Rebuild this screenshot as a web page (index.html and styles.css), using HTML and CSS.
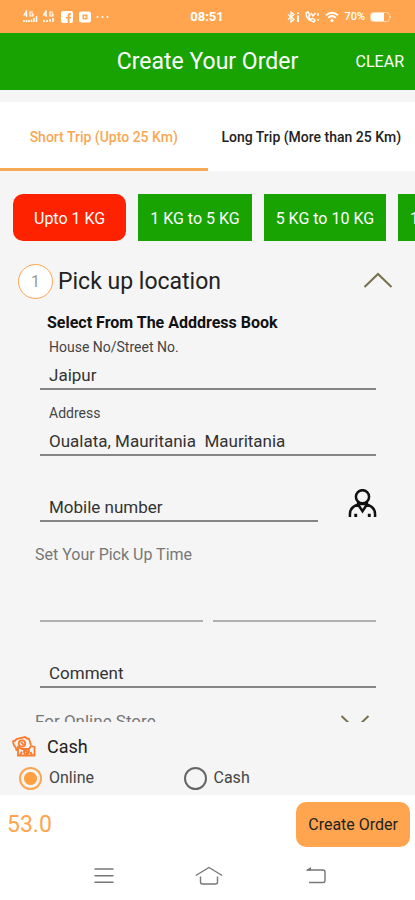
FILE: index.html
```html
<!DOCTYPE html>
<html lang="en">
<head>
<meta charset="utf-8">
<meta name="viewport" content="width=device-width, initial-scale=1">
<title>Create Your Order</title>
<link rel="stylesheet" href="styles.css">
</head>
<body>
<div class="status">
  <div class="status-left">
    <svg width="15" height="14" viewBox="0 0 15 14" fill="none" stroke="#fff" stroke-width="1.2"><path d="M3.5 7V1L1 5h3.5M10 2H7v4h3V4H8.500"/><path d="M1 12v-2M3.500 12v-2M6 12v-2M8.500 12V9.500M11 12V8M13.500 12V6" stroke-width="1.600"/></svg>
    <svg width="12" height="14" viewBox="0 0 12 14" fill="none" stroke="#fff" stroke-width="1.2"><path d="M4 7V1L1.500 5H5M11 2H8v4h3V4H9.500"/><path d="M2 12v-2M5 12v-2M8 12V9M11 12V8" stroke-width="1.600"/></svg>
    <svg class="gap-icon" width="12" height="12" viewBox="0 0 12 12"><path fill="#fff" fill-rule="evenodd" d="M2 0h8a2 2 0 0 1 2 2v8a2 2 0 0 1-2 2H8.500V7.600H10V6H8.500V4.500q0-1 1.500-.8V2.200Q6.600 1.700 6.600 4.500V6H5v1.600h1.600V12H2a2 2 0 0 1-2-2V2a2 2 0 0 1 2-2z"/></svg>
    <svg class="wide-icon" width="12" height="12" viewBox="0 0 12 12"><path fill="#fff" fill-rule="evenodd" d="M2.500 .5h7A2.500 2.500 0 0 1 12 3v6a2.500 2.500 0 0 1-2.500 2.500h-7A2.500 2.500 0 0 1 0 9V3A2.500 2.500 0 0 1 2.500 .5zM3.500 3.500v5h5v-5zM5 4.500L7.500 6 5 7.500z"/></svg>
    <svg width="13" height="12" viewBox="0 0 13 12" fill="#fff"><circle cx="1.500" cy="6" r="1"/><circle cx="6.500" cy="6" r="1"/><circle cx="11.500" cy="6" r="1"/></svg>
  </div>
  <time>08:51</time>
  <div class="status-right">
    <svg width="13" height="12" viewBox="0 0 13 12" fill="none" stroke="#fff" stroke-width="1.300"><path d="M1 3.500l6 5L4 11V1l3 2.500-6 5"/><path d="M11 4.500V11M11 1.500V3" stroke-width="2"/></svg>
    <svg width="15" height="12" viewBox="0 0 15 12" fill="none" stroke="#fff" stroke-width="1.400"><path d="M1 2c0 5 3 8 8 9l1-2-2.500-1.500L6 8.500Q4 7 3.500 5L5 4 3 1zM6 2l2 3 2.500-3M13 2v3M13 8v2"/></svg>
    <svg width="14" height="12" viewBox="0 0 14 12" fill="none" stroke="#fff" stroke-width="2"><path d="M1 4.300q6-5 12 0M3.200 6.800q3.800-3.300 7.600 0"/><path d="M7 7.800l2 1.600-2 2.200-2-2.200z" fill="#fff" stroke="none"/></svg>
    <span>70%</span>
    <svg width="21" height="10" viewBox="0 0 21 10"><rect x=".5" y=".5" width="19" height="9" rx="3" fill="none" stroke="#ffd9b0"/><path d="M3 1h11v8H3a2 2 0 0 1-2-2V3a2 2 0 0 1 2-2z" fill="#fff"/><path d="M20.500 4v2" stroke="#ffd9b0"/></svg>
  </div>
</div>
<header class="header">
  <h1>Create Your Order</h1>
  <button type="button" class="clear">CLEAR</button>
</header>
<nav class="tabs">
  <button type="button" class="tab active">Short Trip (Upto 25 Km)</button>
  <button type="button" class="tab">Long Trip (More than 25 Km)</button>
</nav>
<main class="content">
  <div class="chips">
    <button type="button" class="chip selected">Upto 1 KG</button>
    <button type="button" class="chip">1 KG to 5 KG</button>
    <button type="button" class="chip">5 KG to 10 KG</button>
    <button type="button" class="chip">10 KG to 15 KG</button>
  </div>
  <div class="section-head">
    <span class="step">1</span>
    <h2>Pick up location</h2>
    <svg width="30" height="22" viewBox="0 0 30 22" fill="none" stroke="#77724a" stroke-width="2"><path d="M1.500 16L15 3l13.500 13"/></svg>
  </div>
  <form class="form">
    <h3>Select From The Adddress Book</h3>
    <div class="field">
      <label for="house">House No/Street No.</label>
      <input id="house" type="text" value="Jaipur">
    </div>
    <div class="field address">
      <label for="address">Address</label>
      <input id="address" type="text" value="Oualata, Mauritania  Mauritania">
    </div>
    <div class="row">
      <input type="tel" aria-label="Mobile number" placeholder="Mobile number">
      <button type="button" class="contact" aria-label="Contacts">
        <svg width="29" height="29" viewBox="0 0 30 30" fill="none" stroke="#111" stroke-width="2.600"><circle cx="15" cy="8" r="6.800"/><path d="M10.500 13v3.500M19.500 13v3.500M10.500 15.500h9"/><path d="M2 29v-3q0-7.500 8.500-10L15 23l4.500-7Q28 18.500 28 26v3"/><path d="M8 29v-3.500M22 29v-3.500" stroke-width="3"/></svg>
      </button>
    </div>
    <p class="caption">Set Your Pick Up Time</p>
    <div class="times">
      <input type="text" aria-label="Pick up date">
      <input type="text" aria-label="Pick up time">
    </div>
    <input class="comment" type="text" aria-label="Comment" placeholder="Comment">
    <div class="store">
      <p class="caption">For Online Store</p>
      <svg width="30" height="18" viewBox="0 0 30 18" fill="none" stroke="#77724a" stroke-width="2"><path d="M1.500 4L15 17 28.500 4"/></svg>
    </div>
  </form>
</main>
<section class="payment">
  <div class="pay-title">
    <svg width="24" height="22" viewBox="0 0 24 22" fill="none" stroke="#fb7a2c" stroke-width="1.800"><path d="M6 13.500L4.500 14Q4 11 2 9.500L1 5.500Q3.500 5 4.500 3L13 1q2 2 4 2l2 6"/><circle cx="10" cy="7.500" r="3.200"/><path d="M9 6l2.500 3M6 19.500V11l4 2h7l2-3 3.500 1v8.500zM8 19l2-3.500M20 19l-1.500-3"/><circle cx="14.500" cy="15.500" r="2.500"/><path d="M13 14l3 3"/></svg>
    <span>Cash</span>
  </div>
  <div class="options">
    <label><input type="radio" name="pay" checked>Online</label>
    <label><input type="radio" name="pay">Cash</label>
  </div>
</section>
<footer class="footer">
  <strong class="price">53.0</strong>
  <button type="button" class="create">Create Order</button>
</footer>
<nav class="system" aria-label="System">
  <button type="button" aria-label="Recent apps"><svg width="28" height="20" viewBox="0 0 28 20" fill="none" stroke="#777" stroke-width="1.400"><path d="M4.500 3h19M4.500 9.700h19M4.500 16.300h19"/></svg></button>
  <button type="button" aria-label="Home"><svg width="28" height="20" viewBox="0 0 28 20" fill="none" stroke="#777" stroke-width="1.400"><path d="M.8 9.500L14 1.500l13.200 8M5.500 10.500V16q0 2 2 2h13q2 0 2-2v-5.500"/></svg></button>
  <button type="button" aria-label="Back"><svg width="28" height="20" viewBox="0 0 28 20" fill="none" stroke="#777" stroke-width="1.400"><path d="M7 4h16q2 0 2 2v8.500q0 2-2 2H9"/><path d="M5.500 4.500L11 1v3.500z" fill="#777" stroke="none"/></svg></button>
</nav>
</body>
</html>
```
FILE: styles.css
```css
* {
  box-sizing: border-box;
}

body {
  margin: 0;
  height: 100vh;
  display: flex;
  flex-direction: column;
  overflow: hidden;
  background: #f5f5f5;
  color: #222;
  font-family: Roboto, "Liberation Sans", sans-serif;
}

button,
input {
  font: inherit;
  color: inherit;
  border: 0;
  padding: 0;
  margin: 0;
  background: none;
}

h1, h2, h3, p {
  margin: 0;
  font-weight: 400;
}

svg {
  display: block;
  flex: none;
}

.status {
  flex: none;
  height: 33px;
  display: grid;
  grid-template-columns: 1fr auto 1fr;
  align-items: center;
  padding: 0 24px 0 23px;
  background: #ffa54f;
  color: #fff;
}

.status-left,
.status-right {
  display: flex;
  align-items: center;
  gap: 4px;
}

.gap-icon {
  margin-left: 3px;
}

.wide-icon {
  margin: 0 1px 0 2px;
}

.status-right {
  justify-content: flex-end;
  gap: 5px;
  font-size: 11px;
  font-weight: 500;
}

.status time {
  font-size: 13px;
  font-weight: 700;
}

.header {
  flex: none;
  height: 57px;
  display: grid;
  grid-template-columns: 1fr auto 1fr;
  align-items: center;
  padding: 0 11px;
  background: #18a303;
  color: #fff;
}

.header h1 {
  grid-column: 2;
  font-size: 23px;
}

.clear {
  justify-self: end;
  font-size: 16px;
}

.tabs {
  flex: none;
  display: grid;
  grid-template-columns: 1fr 1fr;
  height: 69px;
  margin-top: 12px;
  background: #fff;
}

.tab {
  padding-top: 4px;
  border-bottom: 3px solid transparent;
  font-size: 14px;
  font-weight: 500;
  white-space: nowrap;
}

.tab.active {
  color: #f9a855;
  border-color: #f9a855;
}

.content {
  flex: 1;
  min-height: 0;
  overflow: hidden;
}

.chips {
  display: flex;
  gap: 12px;
  padding: 23px 0 0 13px;
  overflow: hidden;
}

.chip {
  flex: none;
  height: 47px;
  padding: 2px 12px 0;
  background: #18a303;
  color: #fff;
  font-size: 16px;
}

.chip.selected {
  padding: 2px 21px 0;
  border-radius: 10px;
  background: #ff2200;
}

.section-head {
  display: flex;
  align-items: center;
  gap: 5px;
  margin-top: 23px;
  padding: 0 22px 0 18px;
}

.section-head h2 {
  flex: 1;
  font-size: 23px;
}

.step {
  width: 35px;
  height: 35px;
  display: grid;
  place-items: center;
  border: 1px solid #ffa54f;
  border-radius: 50%;
  background: #fff;
  color: #999;
  font-size: 16px;
}

.form {
  padding: 0 39px 0 40px;
}

.form h3 {
  margin: 12px 7px 0;
  font-size: 16px;
  line-height: 24px;
  font-weight: 700;
  color: #111;
}

.form input {
  display: block;
  width: 100%;
  height: 33px;
  padding: 4px 9px 0;
  border-bottom: 2px solid #858585;
  border-radius: 0;
  outline: 0;
  font-size: 17px;
  color: #333;
}

.form input::placeholder {
  color: #333;
  opacity: 1;
}

.field {
  margin-top: 2px;
}

.field label {
  display: block;
  padding-left: 9px;
  font-size: 14px;
  line-height: 20px;
  color: #444;
}

.address {
  margin-top: 13px;
}

.row {
  display: flex;
  align-items: flex-start;
  gap: 30px;
  margin-top: 33px;
}

.row input {
  flex: 1;
  min-width: 0;
}

.contact {
  margin-right: -1px;
}

.caption {
  font-size: 16px;
  line-height: 24px;
  color: #777;
}

.form > .caption {
  margin: 21px 0 0 -5px;
}

.times {
  display: grid;
  grid-template-columns: 1fr 1fr;
  gap: 10px;
  margin-top: 22px;
}

.form .times input {
  border-color: #b0b0b0;
}

.form .comment {
  margin-top: 33px;
}

.store {
  display: flex;
  justify-content: space-between;
  align-items: center;
  margin: 21px 6px 0 -5px;
}

.store .caption {
  font-size: 17px;
}

.payment {
  flex: none;
  height: 73px;
  padding: 13px 12px 0;
}

.pay-title {
  display: flex;
  align-items: center;
  gap: 11px;
  font-size: 18px;
  line-height: 24px;
}

.options {
  display: grid;
  grid-template-columns: 1fr 1fr;
  column-gap: 0;
  padding: 7px 55px 0 7px;
}

.options label {
  display: flex;
  align-items: center;
  gap: 7px;
  font-size: 16px;
  line-height: 24px;
  color: #444;
}

.options input {
  appearance: none;
  width: 23px;
  height: 23px;
  border: 2px solid #666;
  border-radius: 50%;
}

.options input:checked {
  border-color: #ffa54f;
  background: radial-gradient(circle, #ffa040 0 6px, transparent 7px);
}

.footer {
  flex: none;
  height: 57px;
  display: flex;
  justify-content: space-between;
  align-items: center;
  padding: 2px 5px 0 7px;
  background: #fff;
}

.price {
  font-size: 23px;
  font-weight: 400;
  color: #ffa54f;
}

.create {
  height: 45px;
  padding: 0 12px;
  border-radius: 10px;
  background: #ffa54f;
  font-size: 16px;
}

.system {
  flex: none;
  height: 48px;
  display: grid;
  grid-template-columns: 1fr 1fr 1fr;
  padding: 0 49px 0 51px;
  background: #fff;
}

.system button {
  display: grid;
  place-items: center;
}
```
